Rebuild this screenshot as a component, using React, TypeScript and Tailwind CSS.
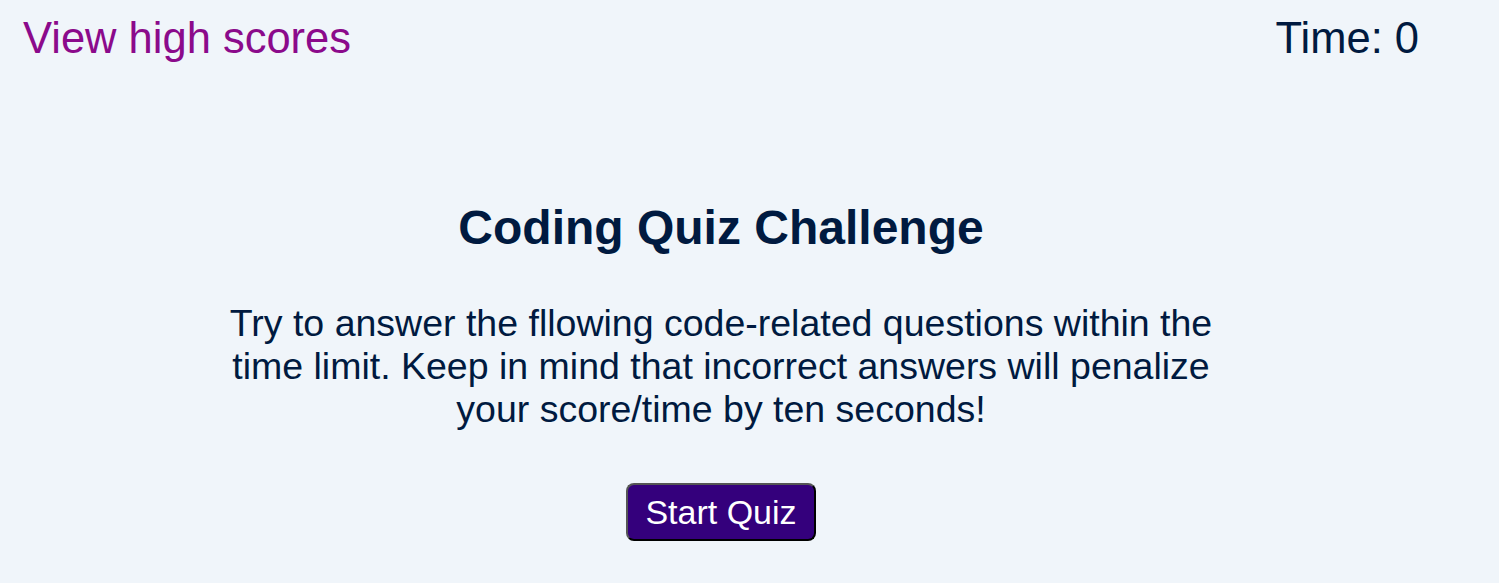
export default function App() {
  return (
    <main
      className="min-h-screen bg-[#f0f5fa] text-[#001a40] pl-[23px] pr-[80px]"
      style={{ fontFamily: '"Liberation Sans", Arial, sans-serif' }}
    >
      {/* Header */}
      <header className="flex justify-between items-center h-[76px]">
        <a href="#" className="text-[43.5px] leading-[50px] text-[#8b0a8b] -mt-[1px]">
          View high scores
        </a>
        <p className="text-[43.5px] leading-[50px] -mt-[1px]">Time: 0</p>
      </header>

      {/* Start screen */}
      <section className="flex flex-col items-center text-center pt-[124px]">
        <h1 className="text-[48px] leading-[56px] font-bold">Coding Quiz Challenge</h1>

        <p className="mt-[46px] max-w-[1020px] text-[37.5px] leading-[43px]">
          Try to answer the fllowing code-related questions within the time limit. Keep in mind
          that incorrect answers will penalize your score/time by ten seconds!
        </p>

        <button className="mt-[52px] h-[58px] px-[17px] rounded-[8px] bg-[#34007c] text-white text-[34px] leading-none border-2 border-t-[#555] border-l-[#555] border-r-black border-b-black">
          Start Quiz
        </button>
      </section>
    </main>
  );
}
